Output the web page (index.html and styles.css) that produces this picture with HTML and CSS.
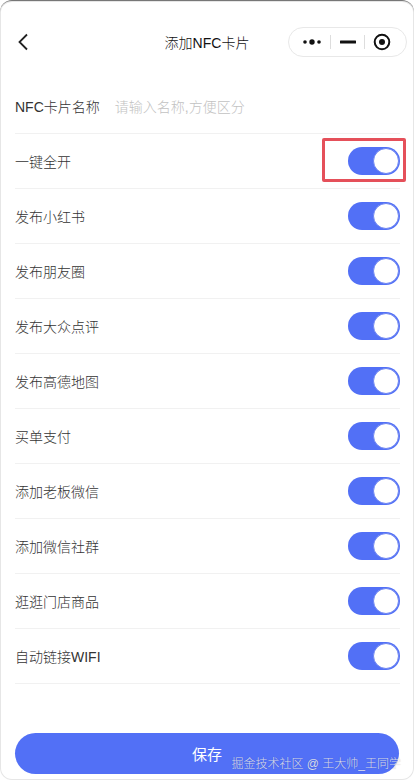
FILE: index.html
```html
<!DOCTYPE html>
<html>

<head>
    <meta charset="utf-8">
    <title>添加NFC卡片</title>
    <link rel="stylesheet" href="styles.css">
</head>

<body>
    <div class="page">
        <header class="nav">
            <svg class="back" width="12" height="18" viewBox="0 0 12 18">
                <path d="M10 1.5 L2.5 9 L10 16.5" fill="none" stroke="#222" stroke-width="1.8" />
            </svg>
            <div class="title">添加NFC卡片</div>
            <div class="capsule">
                <svg width="20" height="8" viewBox="0 0 20 8">
                    <circle cx="3" cy="4" r="1.8" fill="#111" />
                    <circle cx="10" cy="4" r="2.7" fill="#111" />
                    <circle cx="17" cy="4" r="1.8" fill="#111" />
                </svg>
                <span class="sep"></span>
                <svg width="16" height="4" viewBox="0 0 16 4">
                    <rect x="0" y="0.5" width="16" height="3" rx="0.5" fill="#111" />
                </svg>
                <span class="sep"></span>
                <svg width="18" height="18" viewBox="0 0 18 18">
                    <circle cx="9" cy="9" r="7.3" fill="none" stroke="#111" stroke-width="2" />
                    <circle cx="9" cy="9" r="3" fill="#111" />
                </svg>
            </div>
        </header>

        <div class="list">
            <div class="row">
                <span class="label">NFC卡片名称</span>
                <span class="placeholder">请输入名称,方便区分</span>
            </div>
            <div class="row">
                <span class="label">一键全开</span>
                <div class="switch marked"><span class="knob"></span><span class="mark"></span></div>
            </div>
            <div class="row">
                <span class="label">发布小红书</span>
                <div class="switch"><span class="knob"></span></div>
            </div>
            <div class="row">
                <span class="label">发布朋友圈</span>
                <div class="switch"><span class="knob"></span></div>
            </div>
            <div class="row">
                <span class="label">发布大众点评</span>
                <div class="switch"><span class="knob"></span></div>
            </div>
            <div class="row">
                <span class="label">发布高德地图</span>
                <div class="switch"><span class="knob"></span></div>
            </div>
            <div class="row">
                <span class="label">买单支付</span>
                <div class="switch"><span class="knob"></span></div>
            </div>
            <div class="row">
                <span class="label">添加老板微信</span>
                <div class="switch"><span class="knob"></span></div>
            </div>
            <div class="row">
                <span class="label">添加微信社群</span>
                <div class="switch"><span class="knob"></span></div>
            </div>
            <div class="row">
                <span class="label">逛逛门店商品</span>
                <div class="switch"><span class="knob"></span></div>
            </div>
            <div class="row">
                <span class="label">自动链接WIFI</span>
                <div class="switch"><span class="knob"></span></div>
            </div>
        </div>

        <div class="save">
            保存
            <span class="watermark">掘金技术社区 @ 王大帅_王同学</span>
        </div>
    </div>
</body>

</html>
```

FILE: styles.css
```css
body {
    margin: 0;
    background: #fff;
    font-family: "Liberation Sans", "Noto Sans CJK SC", sans-serif;
    font-weight: 300;
    color: #333;
}

.page {
    position: relative;
    height: 780px;
    box-sizing: border-box;
    border-top: 1px solid #777;
    border-radius: 12px;
    box-shadow: inset 0 0 0 1px #e6e6e6;
    overflow: hidden;
}

.nav {
    position: relative;
    display: flex;
    align-items: center;
    justify-content: space-between;
    height: 30px;
    padding: 26px 7px 22px 15px;
}

.back {
    margin-left: 2px;
}

.title {
    position: absolute;
    left: 0;
    right: 0;
    text-align: center;
    font-size: 14px;
    color: #111;
    pointer-events: none;
}

.capsule {
    display: flex;
    align-items: center;
    justify-content: space-between;
    box-sizing: border-box;
    width: 119px;
    height: 30px;
    padding: 0 15px 0 13px;
    border: 1px solid #e8e8e8;
    border-radius: 15px;
    background: #fff;
}

.sep {
    width: 1px;
    height: 14px;
    background: #ddd;
}

.list {
    padding: 0 14px 0 15px;
}

.row {
    display: flex;
    align-items: center;
    justify-content: space-between;
    height: 54px;
    border-bottom: 1px solid #f1f1f1;
    font-size: 14px;
}

.row:first-child {
    justify-content: flex-start;
}

.label {
    color: #333;
}

.placeholder {
    margin-left: 15px;
    color: #c2c2c2;
}

.switch {
    position: relative;
    width: 52px;
    height: 28px;
    border-radius: 14px;
    background: #5270f6;
}

.knob {
    position: absolute;
    top: 1px;
    right: 1px;
    width: 24px;
    height: 24px;
    border-radius: 50%;
    background: #fff;
    border: 1px solid #6c84f2;
}

.mark {
    position: absolute;
    top: -9px;
    left: -26px;
    right: -6px;
    bottom: -7px;
    border: 3px solid #e5505a;
    border-radius: 2px;
}

.save {
    position: relative;
    display: flex;
    align-items: center;
    justify-content: center;
    height: 41px;
    margin: 49px 15px 0;
    border-radius: 21px;
    background: #5270f6;
    color: #fff;
    font-size: 15px;
    font-weight: 400;
}

.watermark {
    position: absolute;
    right: -2px;
    bottom: 3px;
    font-size: 12px;
    font-weight: 300;
    color: rgba(255, 255, 255, 0.8);
    text-shadow: 0 0 1px rgba(0, 0, 0, 0.3);
    white-space: nowrap;
}
```
